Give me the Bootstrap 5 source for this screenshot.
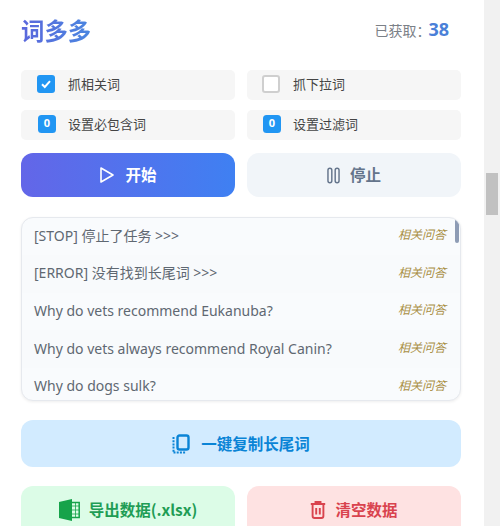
<!DOCTYPE html>
<html lang="zh"><head><meta charset="utf-8"><title>词多多</title>
<link href="https://cdn.jsdelivr.net/npm/bootstrap@5.3.0/dist/css/bootstrap.min.css" rel="stylesheet">
<style>
html,body{height:526px;overflow:hidden;background:#fff}
body{font-family:"Noto Sans CJK SC","Noto Sans",sans-serif;font-size:14px}
.shell{height:526px}
.pane{width:484px;padding:0 23px 0 21px;flex:none}
.rail{width:16px;flex:none;background:#f1f1f1;padding:173px 2px 0}
.rail-thumb{height:42px;background:#c1c1c1}
.head{height:70px;padding-bottom:8px}
.brand{font-size:23.4px;font-weight:700;line-height:1;margin:0;background:linear-gradient(90deg,#5b67dc,#4a86e0);-webkit-background-clip:text;background-clip:text;color:transparent}
.tally{color:#7b8087;font-size:14px;margin:0 12px 3px 0}
.tally b{color:#4a80d8;font-size:18px;margin-left:-2px;font-family:"Open Sans",sans-serif}
.grid2{display:grid;grid-template-columns:214px 214px;column-gap:12px}
.opt{height:30px;background:#f6f6f6;border-radius:5px;padding:0 0 2px 16px;gap:13px;color:#444;font-size:13px;margin-bottom:9.5px}
.opt:nth-child(even){padding-left:15px}
.tick{width:18px;height:18px;border-radius:3px;background:#2196f3;flex:none}
.tick-off{background:#fff;border:2px solid #cfcfcf}
.num{width:18px;height:18px;border-radius:3.5px;background:#2196f3;color:#fff;font-size:11px;font-weight:700;margin-left:1px;margin-right:-1px;font-family:"Open Sans",sans-serif;flex:none}
.act{height:44px;border:0;border-radius:12px;font-size:15.5px;font-weight:600;gap:10px}
.go{background:linear-gradient(90deg,#6366e8,#3f80f2);color:#fff}
.stop{background:#f1f5f9;color:#64748b}
.stop,.go{margin-top:4px}
.feed{margin-top:19.5px;height:184.5px;border:1px solid #e6e9ee;border-radius:12px;overflow:hidden;background:#f9fbfd;box-shadow:0 1px 3px rgba(0,0,0,.07);position:relative}
.line{height:37.6px;padding:0 14px 2px 12px;color:#5f6872;font-size:14px;font-family:"Noto Sans","Noto Sans CJK SC",sans-serif;white-space:nowrap}
.line:nth-child(even){background:#f8fafc}
.line i{font-size:12px;color:#a98f45}
.bar{position:absolute;right:1px;top:1px;width:4px;height:24px;border-radius:2px;background:#8e9cb5}
.wide{display:flex;width:100%;height:47px;margin-top:19px;background:#d2ebff;color:#0a84d6;gap:11px;padding-bottom:6px}
.wide2{margin-top:19px}
.low{height:60px;gap:9px;padding-bottom:18px}
.xl{background:#dcfce7;color:#1f9d55}
.del{background:#fee2e2;color:#d9434e}
</style></head>
<body>
<div class="shell d-flex">
<main class="pane">
 <header class="head d-flex justify-content-between align-items-center">
  <h1 class="brand">词多多</h1>
  <div class="tally">已获取：<b>38</b></div>
 </header>
 <section class="grid2">
  <div class="opt d-flex align-items-center"><span class="tick d-flex align-items-center justify-content-center"><svg width="12" height="12" viewBox="0 0 12 12"><path d="M2 6.2 4.8 9 10 3.2" fill="none" stroke="#fff" stroke-width="2"/></svg></span>抓相关词</div>
  <div class="opt d-flex align-items-center"><span class="tick tick-off"></span>抓下拉词</div>
  <div class="opt d-flex align-items-center"><span class="num d-flex align-items-center justify-content-center">0</span>设置必包含词</div>
  <div class="opt d-flex align-items-center"><span class="num d-flex align-items-center justify-content-center">0</span>设置过滤词</div>
 </section>
 <section class="grid2">
  <button class="btn act go d-flex align-items-center justify-content-center"><svg width="16" height="18" viewBox="0 0 16 18"><path d="M2 2 14 9 2 16Z" fill="none" stroke="#fff" stroke-width="1.6" stroke-linejoin="round"/></svg>开始</button>
  <button class="btn act stop d-flex align-items-center justify-content-center"><svg width="13" height="17" viewBox="0 0 13.5 17"><rect x="1" y="1" width="4" height="15" rx="2" fill="none" stroke="#64748b" stroke-width="1.5"/><rect x="8.5" y="1" width="4" height="15" rx="2" fill="none" stroke="#64748b" stroke-width="1.5"/></svg>停止</button>
 </section>
 <section class="feed">
  <div class="line d-flex justify-content-between align-items-center"><span>[STOP] 停止了任务 &gt;&gt;&gt;</span><i>相关问答</i></div>
  <div class="line d-flex justify-content-between align-items-center"><span>[ERROR] 没有找到长尾词 &gt;&gt;&gt;</span><i>相关问答</i></div>
  <div class="line d-flex justify-content-between align-items-center"><span>Why do vets recommend Eukanuba?</span><i>相关问答</i></div>
  <div class="line d-flex justify-content-between align-items-center"><span>Why do vets always recommend Royal Canin?</span><i>相关问答</i></div>
  <div class="line d-flex justify-content-between align-items-center"><span>Why do dogs sulk?</span><i>相关问答</i></div>
  <div class="bar"></div>
 </section>
 <button class="btn act wide align-items-center justify-content-center"><svg width="18" height="20" viewBox="0 0 18 20"><rect x="5.5" y="1.5" width="11" height="14" rx="2" fill="none" stroke="#0a84d6" stroke-width="2.4"/><path d="M1.5 3v16M1.5 18.5h12" fill="none" stroke="#0a84d6" stroke-width="2" stroke-dasharray="2 1.2"/></svg>一键复制长尾词</button>
 <section class="grid2 wide2">
  <button class="btn act low xl d-flex align-items-center justify-content-center"><svg width="21" height="22" viewBox="0 0 21 22"><path d="M0 3 13 0V22L0 19Z" fill="#16a34a"/><path d="M13 3.5H20.2V18.5H13" fill="none" stroke="#16a34a" stroke-width="1.5"/><path d="M13 7h7M13 11h7M13 15h7M16.5 4v14" stroke="#16a34a" stroke-width=".8"/></svg>导出数据(.xlsx)</button>
  <button class="btn act low del d-flex align-items-center justify-content-center"><svg width="16" height="18" viewBox="0 0 16 18"><path d="M.8 3h14.4M5.5 2.6V1h5v1.6M2.6 3.5V15a2 2 0 0 0 2 2h6.8a2 2 0 0 0 2-2V3.5M6.2 7v6.5M9.8 7v6.5" fill="none" stroke="#d9434e" stroke-width="1.9"/></svg>清空数据</button>
 </section>
</main>
<aside class="rail"><div class="rail-thumb"></div></aside>
</div>
<script src="https://cdn.jsdelivr.net/npm/bootstrap@5.3.0/dist/js/bootstrap.bundle.min.js"></script>
</body></html>
